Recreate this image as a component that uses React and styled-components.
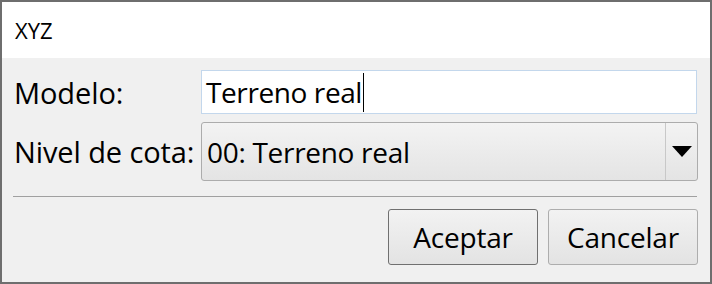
import React from "react";
import styled, { createGlobalStyle } from "styled-components";

const Global = createGlobalStyle`
  html, body { margin: 0; padding: 0; background: #ffffff; }
  body { font-family: "Open Sans", "Noto Sans", sans-serif; color: #000; }
  * { box-sizing: border-box; }
`;

const Window = styled.div`
  width: 712px;
  height: 284px;
  border: 2px solid #6e6e6e;
  display: flex;
  flex-direction: column;
  background: #f0f0f0;
`;

const TitleBar = styled.div`
  height: 56px;
  flex: none;
  background: #ffffff;
  display: flex;
  align-items: center;
  padding-left: 13px;
  font-size: 22px;
`;

const Body = styled.div`
  flex: 1;
  padding: 12px 12px 0 12px;
  display: flex;
  flex-direction: column;
`;

const Form = styled.div`
  display: grid;
  grid-template-columns: 187px 1fr;
  grid-template-rows: 44px 59px;
  row-gap: 8px;
  align-items: center;
`;

const Label = styled.div`
  font-size: 29px;
  letter-spacing: -0.1px;
  white-space: nowrap;
  line-height: 1;
`;

const TextField = styled.div`
  height: 44px;
  margin-right: 1px;
  background: #ffffff;
  border: 1px solid #c3d7ec;
  display: flex;
  align-items: center;
  padding-left: 4px;
  font-size: 28px;
  letter-spacing: -0.4px;
`;

const Caret = styled.span`
  display: inline-block;
  width: 1px;
  height: 39px;
  background: #000;
  margin-left: 1px;
`;

const Combo = styled.div`
  height: 59px;
  border: 1px solid #acacac;
  border-radius: 3px;
  background: linear-gradient(#f3f3f3, #e4e4e4);
  display: flex;
  align-items: stretch;
`;

const ComboText = styled.div`
  flex: 1;
  display: flex;
  align-items: center;
  padding-left: 5px;
  font-size: 28px;
  letter-spacing: -0.3px;
`;

const ComboArrow = styled.div`
  width: 32px;
  border-left: 1px solid #c8c8c8;
  display: flex;
  align-items: center;
  justify-content: center;
`;

const Separator = styled.div`
  height: 1px;
  background: #a0a0a0;
  margin: 15px 1px 12px -1px;
`;

const Buttons = styled.div`
  display: flex;
  justify-content: flex-end;
  gap: 10px;
`;

const Button = styled.div`
  width: 150px;
  height: 56px;
  border: 1px solid ${(p) => (p.$default ? "#707070" : "#adadad")};
  border-radius: 3px;
  background: linear-gradient(#f2f2f2, #e3e3e3);
  display: flex;
  align-items: center;
  justify-content: center;
  font-size: 28px;
  letter-spacing: -0.2px;
`;

export default function App() {
  return (
    <>
      <Global />
      <Window>
        <TitleBar>XYZ</TitleBar>
        <Body>
          <Form>
            <Label>Modelo:</Label>
            <TextField>
              Terreno real
              <Caret />
            </TextField>
            <Label>Nivel de cota:</Label>
            <Combo>
              <ComboText>00: Terreno real</ComboText>
              <ComboArrow>
                <svg width="20" height="11" viewBox="0 0 20 11">
                  <polygon points="0,0 20,0 10,11" fill="#000" />
                </svg>
              </ComboArrow>
            </Combo>
          </Form>
          <Separator />
          <Buttons>
            <Button $default>Aceptar</Button>
            <Button>Cancelar</Button>
          </Buttons>
        </Body>
      </Window>
    </>
  );
}
